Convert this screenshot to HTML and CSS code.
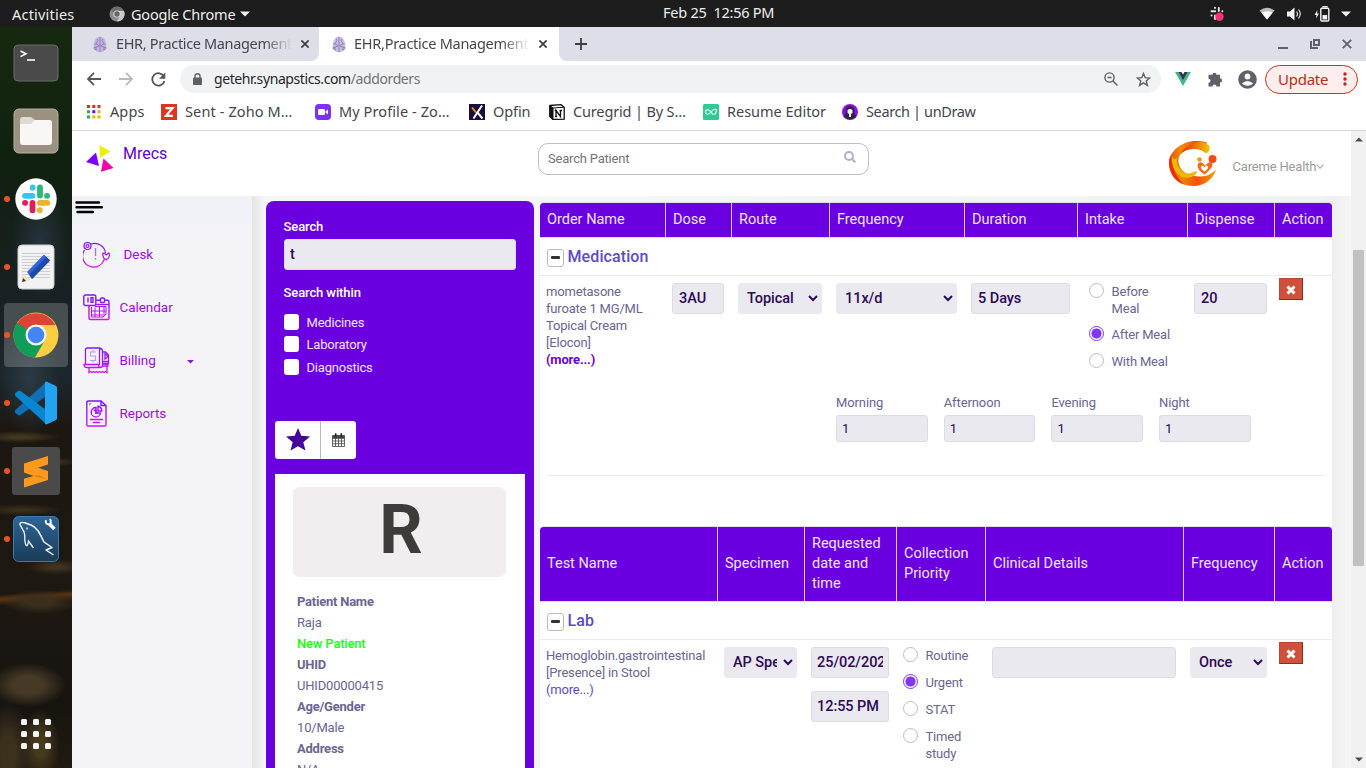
FILE: index.html
```html
<!DOCTYPE html>
<html lang="en">
<head>
<meta charset="utf-8">
<title>Mrecs - Add Orders</title>
<link rel="stylesheet" href="styles.css">
</head>
<body>
<div class="topbar">
  <span class="activities">Activities</span>
  <svg class="app-ico" width="16" height="16" viewBox="0 0 16 16"><circle cx="8" cy="8" r="7.5" fill="#8d8d8d"/><path d="M8 8L1.5 4.5A7.5 7.5 0 0 1 14.6 4.5L8 4.5Z" fill="#6c6c6c"/><path d="M8 8L11.3 9.5 7.8 15.5A7.5 7.5 0 0 0 15 5L9 5Z" fill="#c8c8c8"/><circle cx="8" cy="8" r="3.6" fill="#ddd"/><circle cx="8" cy="8" r="2.7" fill="#666"/></svg>
  <span class="app-name">Google Chrome</span>
  <svg width="10" height="6" viewBox="0 0 10 6"><path d="M0 .5h10L5 5.5z" fill="#f2f2f2"/></svg>
  <span class="clock">Feb 25&nbsp; 12:56 PM</span>
  <div class="tray">
    <svg class="t-slack" width="16" height="16" viewBox="0 0 16 16"><g stroke="#e6e6e6" stroke-width="1.900" stroke-linecap="round"><path d="M6 1.800v.2M6.200 5.200H2.500M9.800 2v3M13.300 5.200h.1M2.500 9.500h.1M6 9.500V13"/></g><circle cx="10.500" cy="10.800" r="4.200" fill="#f6317c"/></svg>
    <svg class="t-wifi" width="16" height="13" viewBox="0 0 16 13"><path d="M.5 3.500Q8-2 15.500 3.500L8 12.500z" fill="#bbb"/><path d="M2.500 5.800Q8 2.500 13.500 5.800L8 12.500z" fill="#fff"/></svg>
    <svg class="t-vol" width="15" height="14" viewBox="0 0 15 14"><path d="M0 4.500h3L7.500.5v13L3 9.500H0z" fill="#f2f2f2"/><path d="M9.500 4.500q2 2.500 0 5M11.500 2.500q3.500 4.500 0 9" fill="none" stroke="#ddd" stroke-width="1.200"/></svg>
    <svg class="t-bat" width="16" height="16" viewBox="0 0 16 16"><path d="M3.500 4L.5 9h2l-.5 3.500L5 7.500H3z" fill="#f2f2f2"/><path d="M9 1.500V.7h4v.8" stroke="#f2f2f2" fill="none" stroke-width="1.400"/><rect x="6.800" y="2.200" width="8" height="12.800" rx="1" fill="none" stroke="#f2f2f2" stroke-width="1.400"/><path d="M8.500 9h4.700v4.500H8.500z" fill="#f2f2f2"/></svg>
    <svg width="10" height="6" viewBox="0 0 10 6"><path d="M0 .5h10L5 5.500z" fill="#f2f2f2"/></svg>
  </div>
</div>
<div class="desktop">
  <div class="dock">
    <div class="tile"><svg width="48" height="48" viewBox="0 0 48 48"><rect x="2" y="6" width="44" height="36" rx="4" fill="#4a4a4a" stroke="#6a6a6a"/><path d="M8.500 12l5.500 2.800-5.500 2.800" fill="none" stroke="#fff" stroke-width="1.600"/><path d="M15 21h8" stroke="#fff" stroke-width="1.600"/></svg></div>
    <div class="tile"><svg width="48" height="48" viewBox="0 0 48 48"><rect x="2" y="2" width="44" height="44" rx="5" fill="#9a9180" stroke="#b9b2a2"/><path d="M8 13q0-3 3-3h8l4 3h14q3 0 3 3v3H8z" fill="#dedbd2"/><path d="M8 17h11l4-4h14q3 0 3 3v19q0 3-3 3H11q-3 0-3-3z" fill="#f8f7f5"/></svg></div>
    <div class="tile run"><svg width="48" height="48" viewBox="0 0 48 48"><circle cx="24" cy="24" r="20.700" fill="#fff"/><g stroke-width="5.800" stroke-linecap="round"><path d="M13 20.800h7.500" stroke="#36c5f0"/><path d="M20.700 12.500v.2" stroke="#36c5f0"/><path d="M28 12.500v8" stroke="#2eb67d"/><path d="M35 20.800h.2" stroke="#2eb67d"/><path d="M27.800 27.800h7.500" stroke="#ecb22e"/><path d="M27.800 35.200v.1" stroke="#ecb22e"/><path d="M20.500 27.800v7.500" stroke="#e01e5a"/><path d="M13 27.800h.2" stroke="#e01e5a"/></g></svg></div>
    <div class="tile run"><svg width="48" height="48" viewBox="0 0 48 48"><rect x="6" y="2" width="36" height="44" rx="4" fill="#f2f2f2" stroke="#ccc"/><path d="M10 10.500h28M10 13.500h28M10 16.500h28M10 19.500h28M10 22.500h28M10 25.500h28M10 28.500h28M10 31.500h28M10 34.500h28" stroke="#cfcfcf"/><path d="M12 31l6 6-8 2z" fill="#fbdfbb"/><path d="M10 39l1-4 3 3z" fill="#333"/><path d="M15 29L32 11.500l6 6L20 36z" fill="#2f64d8"/><path d="M17.500 31.500L34.500 14l3.500 3.500L20 36z" fill="#1e49a8"/></svg></div>
    <div class="tile run active"><svg width="48" height="48" viewBox="0 0 48 48"><circle cx="24" cy="24" r="22.500" fill="#ffcd40"/><path d="M24 24L4.500 13A22.500 22.500 0 0 1 43.500 14H24z" fill="#db4437"/><path d="M24 24L5 12A22.500 22.500 0 0 0 23 46.500L33 29z" fill="#0f9d58"/><circle cx="24" cy="24" r="10.500" fill="#f3f3f3"/><circle cx="24" cy="24" r="8.300" fill="#4285f4"/></svg></div>
    <div class="tile run"><svg width="48" height="48" viewBox="0 0 48 48"><path d="M3.500 31q-1.500 1.500 0 3l2.500 2q1.200.8 2.500 0L34 17V3z" fill="#0f70b5"/><path d="M3.500 17q-1.500-1.500 0-3L6 12q1.200-.8 2.500 0L34 31v14z" fill="#0a86d1"/><path d="M33 3l1.500-.5L44 7q1 .6 1 2v30q0 1.400-1 2l-9.500 4.500-1.500-.5z" fill="#23a4f2"/></svg></div>
    <div class="tile run"><svg width="48" height="48" viewBox="0 0 48 48"><rect width="48" height="48" rx="3" fill="#4a4a4a"/><path d="M12 16.500L36 9v8.500l-10 3.200L36 24v9L12 40.500v-8.700L21.500 29 12 25.500z" fill="#ff9a1f"/><path d="M21.500 29L36 32.600 26 28z" fill="#db7e14"/></svg></div>
    <div class="tile run"><svg width="48" height="48" viewBox="0 0 48 48"><defs><linearGradient id="my" x2="0" y2="1"><stop stop-color="#2d6597"/><stop offset="1" stop-color="#1a3c58"/></linearGradient></defs><rect x="1.500" y="1.500" width="45" height="45" rx="5" fill="url(#my)" stroke="#3b7cb0"/><path d="M12 17L8 9.500Q7.500 7 11 7.500c3 0 5 2 8 2.500 6 2 9 9 13 17l8 5.500-6 2.500 7.500 5" fill="none" stroke="#f2f8ff" stroke-width="1.500" stroke-linejoin="round"/><path d="M11.500 16c3 5 0 8 2 13 1 3 2.500 2 3-3l5 7M15 12.500v2" fill="none" stroke="#f2f8ff" stroke-width="1.300"/><path d="M37 8.500l5.500 5.500" stroke="#fff" stroke-width="3.500"/><path d="M34 5q-1.500 4 3.500 4.500Q40 8 38 4" fill="none" stroke="#fff" stroke-width="1.800"/></svg></div>
    <div class="tile apps"><svg width="48" height="48" viewBox="0 0 48 48"><g fill="#f4f4f4"><rect x="9" y="9" width="6" height="6" rx="1.500"/><rect x="21" y="9" width="6" height="6" rx="1.500"/><rect x="33" y="9" width="6" height="6" rx="1.500"/><rect x="9" y="21" width="6" height="6" rx="1.500"/><rect x="21" y="21" width="6" height="6" rx="1.500"/><rect x="33" y="21" width="6" height="6" rx="1.500"/><rect x="9" y="33" width="6" height="6" rx="1.500"/><rect x="21" y="33" width="6" height="6" rx="1.500"/><rect x="33" y="33" width="6" height="6" rx="1.500"/></g></svg></div>
  </div>

  <div class="browser">
    <div class="tabs">
      <div class="tab first">
        <svg class="fav" width="14" height="17" viewBox="0 0 14 17"><path d="M7 .5Q12 .5 13.300 8.500 14 16 7 16.500 0 16 .7 8.500 2 .5 7 .5z" fill="#c3b6dc"/><path d="M7 1v15M4 3q2 1 0 3t1 3-2 2 1 3M10 3q-2 1 0 3t-1 3 2 2-1 3M1.500 8h2M10.500 8h2M2 12h2M10 12h2" stroke="#8a76b5" stroke-width=".9" fill="none"/></svg>
        <span class="tab-title">EHR, Practice Management</span>
        <svg class="x" width="8" height="8" viewBox="0 0 8 8"><path d="M.4.4l7.200 7.200M7.600.4L.4 7.600" stroke="#3c3e42" stroke-width="1.700"/></svg>
      </div>
      <div class="tab current">
        <svg class="fav" width="14" height="17" viewBox="0 0 14 17"><path d="M7 .5Q12 .5 13.300 8.500 14 16 7 16.500 0 16 .7 8.500 2 .5 7 .5z" fill="#c9bfe0"/><path d="M7 1v15M4 3q2 1 0 3t1 3-2 2 1 3M10 3q-2 1 0 3t-1 3 2 2-1 3M1.500 8h2M10.500 8h2M2 12h2M10 12h2" stroke="#8a76b5" stroke-width=".9" fill="none"/></svg>
        <span class="tab-title">EHR,Practice Management</span>
        <svg class="x" width="8" height="8" viewBox="0 0 8 8"><path d="M.4.4l7.200 7.200M7.600.4L.4 7.600" stroke="#3c3e42" stroke-width="1.700"/></svg>
      </div>
      <div class="tab-rest">
        <svg width="12" height="12" viewBox="0 0 12 12"><path d="M6 0v12M0 6h12" stroke="#3c3e42" stroke-width="1.800"/></svg>
        <div class="winctl">
          <svg width="10" height="10" viewBox="0 0 10 10"><path d="M0 9h10" stroke="#5f6068" stroke-width="2"/></svg>
          <svg width="10" height="10" viewBox="0 0 10 10"><path d="M4 1h5v5H4z" fill="none" stroke="#5f6068" stroke-width="2"/><path d="M1 2v7h7" fill="none" stroke="#5f6068" stroke-width="2"/></svg>
          <svg width="10" height="10" viewBox="0 0 10 10"><path d="M.8.8l8.400 8.400M9.200.8L.8 9.200" stroke="#5f6068" stroke-width="1.800"/></svg>
        </div>
      </div>
    </div>

    <div class="toolbar">
      <svg width="14" height="14" viewBox="0 0 14 14"><path d="M14 7H1.500M7 .8L.9 7 7 13.200" fill="none" stroke="#56575c" stroke-width="1.800"/></svg>
      <svg class="fwd" width="14" height="14" viewBox="0 0 14 14"><path d="M0 7h12.500M7 .8L13.100 7 7 13.200" fill="none" stroke="#b9babd" stroke-width="1.800"/></svg>
      <svg class="reload" width="15" height="15" viewBox="0 0 15 15"><path d="M13 4.500A6.200 6.200 0 1 0 13.500 9" fill="none" stroke="#56575c" stroke-width="1.800"/><path d="M14.300.5v6.300H8z" fill="#56575c"/></svg>
      <div class="omnibox">
        <svg width="9" height="12" viewBox="0 0 9 12"><path d="M2 5V3a2.500 2.300 0 0 1 5 0v2" fill="none" stroke="#5f6166" stroke-width="1.400"/><rect y="4.500" width="9" height="7.500" rx="1" fill="#5f6166"/></svg>
        <span class="url">getehr.synapstics.com<i>/addorders</i></span>
        <svg class="zoomout" width="14" height="14" viewBox="0 0 14 14"><circle cx="5.500" cy="5.500" r="4.600" fill="none" stroke="#5f6166" stroke-width="1.400"/><path d="M3.500 5.500h4M9 9l4.500 4.500" stroke="#5f6166" stroke-width="1.500"/></svg>
        <svg width="15" height="15" viewBox="0 0 15 15"><path d="M7.500 1.500l1.700 4.200 4.500.3-3.500 2.900 1.200 4.500-3.900-2.500-3.900 2.500 1.200-4.500L1.300 6l4.500-.3z" fill="none" stroke="#5f6166" stroke-width="1.400"/></svg>
      </div>
      <svg class="vue" width="16" height="14" viewBox="0 0 16 14"><path d="M0 0h4.500L8 6l3.500-6H16L8 14z" fill="#41b883"/><path d="M3.500 0h3L8 2.500 9.500 0h3L8 8z" fill="#35305c"/></svg>
      <svg class="puzzle" width="15" height="15" viewBox="0 0 15 15"><path d="M4.500 2.800a2 2 0 0 1 4 0H12v3.500a2 2 0 0 1 0 4.200V14.500H8.500a2 2 0 0 0-4 0H.5v-3.700a2 2 0 0 0 0-4V2.800z" fill="#5f6068"/></svg>
      <svg class="user" width="19" height="19" viewBox="0 0 19 19"><circle cx="9.500" cy="9.500" r="9.300" fill="#5f6068"/><circle cx="9.500" cy="6.500" r="2.900" fill="#fff"/><path d="M3.800 13.600Q9.500 8.500 15.200 13.600 9.500 18 3.800 13.600z" fill="#fff"/></svg>
      <div class="update"><span>Update</span><svg width="4" height="14" viewBox="0 0 4 14"><g fill="#c5221f"><circle cx="2" cy="2" r="1.700"/><circle cx="2" cy="7" r="1.700"/><circle cx="2" cy="12" r="1.700"/></g></svg></div>
    </div>

    <div class="bookmarks">
      <div class="bm b1"><svg width="14" height="14" viewBox="0 0 14 14"><path d="M0 0h3v3H0zM5.300 0h3v3h-3zM10.500 0h3v3h-3z" fill="#d93025"/><path d="M0 5.200h3v3H0zM0 10.500h3v3H0z" fill="#2da94f"/><path d="M5.300 5.200h3v3h-3z" fill="#7a00f0"/><path d="M10.500 5.200h3v3h-3zM5.300 10.500h3v3h-3zM10.500 10.500h3v3h-3z" fill="#e6b800"/></svg><span>Apps</span></div>
      <div class="bm b2"><svg width="16" height="16" viewBox="0 0 16 16"><path d="M0 0h16v16H0z" fill="#e1341e"/><path d="M4.500 4.200h7L5 11.800h7" fill="none" stroke="#fff" stroke-width="2.200"/></svg><span>Sent - Zoho M…</span></div>
      <div class="bm b3"><svg width="16" height="16" viewBox="0 0 16 16"><rect width="16" height="16" rx="4" fill="#7b2ff7"/><rect x="3" y="5" width="7" height="6" rx="1.200" fill="#fff"/><path d="M10.500 7.500L13 5.500v5l-2.500-2z" fill="#fff"/></svg><span>My Profile - Zo…</span></div>
      <div class="bm b4"><svg width="16" height="16" viewBox="0 0 16 16"><path d="M0 0h16v16H0z" fill="#170f3a"/><path d="M13 1.500L4.500 14.500" stroke="#fff" stroke-width="2"/><path d="M8 8l5.500 6.500" stroke="#fff" stroke-width="2"/><path d="M3 3.500l4 5" stroke="#f58a1f" stroke-width="2"/></svg><span>Opfin</span></div>
      <div class="bm b5"><svg width="16" height="16" viewBox="0 0 16 16"><path d="M.8 1.500L12 .7l3.200 2.500v12L4 15.500.8 12.500z" fill="#fff" stroke="#111" stroke-width="1.300"/><path d="M1 1.500L4 4v11.500L1 12.500zM4 4l11-.8" fill="#111" stroke="#111"/><path d="M7 12.500v-6l4.500 6v-6M5.700 6.500H8M10.500 6.500h2.500M6 12.500h2.200" fill="none" stroke="#111" stroke-width="1.300"/></svg><span>Curegrid | By S…</span></div>
      <div class="bm b6"><svg width="16" height="16" viewBox="0 0 16 16"><rect width="16" height="16" rx="1.500" fill="#2dcb92"/><path d="M8 8C6 5 2.500 5 2.500 8S6 11 8 8s4-3 5.500-2.500Q13 11 10.500 10.500 9 10 8 8z" fill="none" stroke="#fff" stroke-width="1.100"/></svg><span>Resume Editor</span></div>
      <div class="bm b7"><svg width="16" height="16" viewBox="0 0 16 16"><circle cx="8" cy="8" r="8" fill="#8f0cf7"/><path d="M1.500 12Q4 11 3.500 6 4 2 8 2t4.500 4q-.5 5 2 6A8 8 0 0 1 1.500 12z" fill="#2f2440"/><path d="M5.500 6q2.500-2 5 0v3L9 10v3H7v-3L5.500 9z" fill="#f5f0f5"/></svg><span>Search | unDraw</span></div>
    </div>

    <div class="viewport">
      <div class="page">
        <header class="header">
          <svg class="logo" width="28" height="28" viewBox="0 0 28 28"><path d="M13.500 1l11 6.500-10.500 6z" fill="#eaf000"/><path d="M0 18l10-9.500L13 22z" fill="#7a00ff"/><path d="M17.500 14.500L27.500 24l-12.500 3.800z" fill="#f500a8"/></svg>
          <span class="brand">Mrecs</span>
          <div class="search"><span>Search Patient</span><svg width="12" height="12" viewBox="0 0 12 12"><circle cx="5" cy="5" r="4" fill="none" stroke="#afaecb" stroke-width="1.900"/><path d="M8 8l3.300 3.300" stroke="#afaecb" stroke-width="2"/></svg></div>
          <svg class="careme" width="50" height="46" viewBox="0 0 50 46"><defs><linearGradient id="c1" x1="0" y1="0" x2="1" y2="0"><stop stop-color="#ea4a10"/><stop offset=".25" stop-color="#f08a06"/><stop offset=".6" stop-color="#f2500c"/><stop offset="1" stop-color="#f3a000"/></linearGradient><linearGradient id="c2" x2="1"><stop stop-color="#f01e08"/><stop offset=".5" stop-color="#f2700c"/><stop offset="1" stop-color="#efc800"/></linearGradient></defs><path d="M39 1.500Q24-3 12 4.500 0 12 1 25 3 38 14 43 28 48 39 41 46 36 48 28.500 42 35 33 35.500 20 36 14 29 8 21 12 14 17 8 25 8H37z" fill="url(#c1)"/><path d="M13 12Q18 4 30 1 37 .5 41 4.500 43 8 40 11.500 37 13 34 9.500 22 5 13 12z" fill="url(#c2)"/><path d="M4.500 14Q2 29 14 36q10 3 15.500-5-2-2-6 1-9 2-12.500-5Q8 22 9 17 5 20 4.500 14z" fill="#edba05"/><path d="M2.500 14Q-1 24 4 33q4 8 12 10Q5 35 2.500 14z" fill="#ee2b0a"/><path d="M36.500 33.500Q29 29 29.500 24q1-4 5-2 2 1 2.500 3 3-5 6.500-3.500Q47 25 36.500 33.500z" fill="#ee6b12"/><path d="M36.500 30.500q-4.500-3-3.500-5.500 2-1.500 3.500 1.500 2-3 3.500-1.500 1 2.500-3.500 5.500z" fill="#fff"/><circle cx="31.500" cy="18.500" r="2.300" fill="#f09a10"/><circle cx="44.500" cy="18" r="4" fill="#f04a18"/></svg>
          <span class="org">Careme Health</span>
          <svg class="org-v" width="8" height="5" viewBox="0 0 8 5"><path d="M.6.7L4 4.100 7.400.7" fill="none" stroke="#a9a9a9" stroke-width="1.200"/></svg>
        </header>
        <div class="content">
          <nav class="side">
            <svg class="burger" width="28" height="13" viewBox="0 0 28 13"><g stroke="#000" stroke-width="2.400" stroke-linecap="round"><path d="M1.500 1.500h22.500M1.500 6.200h25.500M2.500 11h15.500"/></g></svg>
            <svg width="0" height="0" class="defs"><defs><linearGradient id="pv" gradientUnits="userSpaceOnUse" x1="0" y1="0" x2="0" y2="27"><stop stop-color="#7418f5"/><stop offset="1" stop-color="#d912f2"/></linearGradient></defs></svg>
            <a class="nav desk"><svg width="27" height="27" viewBox="0 0 27 27"><g fill="none" stroke="url(#pv)" stroke-width="1.200"><path d="M8 3A11 11 0 0 1 22.500 12M21.500 17A11 11 0 1 1 1.500 9"/><circle cx="4.500" cy="5" r="3.500"/><circle cx="4.500" cy="5" r="1.500"/><path d="M19.500 13l1.500-1 2.200 2 2.300-2 1.200 1-1 4-2.500 2-2.500-2z"/></g><path d="M11.800 7h1.400v8h-1.400zM11.800 17h1.400v1.600h-1.400z" fill="#b070f5"/></svg><span>Desk</span></a>
            <a class="nav"><svg width="27" height="27" viewBox="0 0 27 27"><g fill="none" stroke="url(#pv)" stroke-width="1.400"><rect x=".8" y="1" width="12" height="10.500" rx="1.500"/><path d="M5 3.500v5M8 3.800h2v4.500H8zM13 6.300h4.500M22 6.300h2.500q1.500 0 1.500 1.500V24q0 1.500-1.500 1.500h-17Q6 25.500 6 24V12"/><rect x="17.500" y="4" width="4" height="4.500" rx="1"/><path d="M13 10.500h13" /><path d="M9 17h14M8.500 21h14M12 13.500V23M16.500 12v11M21 12.500V20M8.500 13v10M12 12.500h11V20l-3 3H8.500" stroke-width="1"/></g></svg><span>Calendar</span></a>
            <a class="nav"><svg width="27" height="27" viewBox="0 0 27 27"><g fill="none" stroke="url(#pv)" stroke-width="1.300"><path d="M2.500 17V3q0-2 2-2h13q-1 .5-1 3v14M17 1.500q2.500 0 2.500 3v14q0 2-2.500 2M1 17.500h14.500q0 3 2 3H4q-3 0-3-3zM6 21v4.500l1.500-1 1.500 1 1.500-1 1.500 1 1.500-1 1.500 1 1.500-1 1.500 1 1.500-1 1.500 1 1.500-1 1.500 1V17M19.500 5h3l3 3v9h-6M19.500 19h6"/><path d="M20 14.500h5.500M22 6v6l3-2.500L22.500 7M20 16.500h5.500" /></g><path d="M13 5H7.500v4h5v4.500H7M10 3v2M10 13.500v2" fill="none" stroke="#b6a0ee" stroke-width="1.200"/></svg><span>Billing</span><svg class="caret" width="7" height="4" viewBox="0 0 7 4"><path d="M0 0h7L3.500 3.500z" fill="#8d14e0"/></svg></a>
            <a class="nav rep"><svg width="27" height="27" viewBox="0 0 27 27"><g fill="none" stroke="url(#pv)" stroke-width="1.400"><path d="M5.500 1H18l5 4.500V25q0 1-1 1H5q-1.200 0-1.200-1V2.500Q3.800 1 5.500 1zM18 1v4.500h5"/><path d="M13 7.500A4.700 4.700 0 1 0 17.500 13H13z"/><path d="M15 6.300A5 5 0 0 1 18.800 11H15zM11 11q1-2 2 0v2h2"/><path d="M7 19.500h13M10 22.500h7"/></g><path d="M6 3h3L6 6z" fill="#a78cf5"/></svg><span>Reports</span></a>
          </nav>
          <main class="main">
            <section class="panel">
              <label class="plabel">Search</label>
              <div class="field query">t</div>
              <label class="plabel within">Search within</label>
              <div class="check"><i></i><span>Medicines</span></div>
              <div class="check"><i></i><span>Laboratory</span></div>
              <div class="check"><i></i><span>Diagnostics</span></div>
              <div class="btns">
                <span class="star"><svg width="24" height="23" viewBox="0 0 24 23"><path d="M12 0l3.300 7.800 8.700.7-6.700 5.700L19.500 22.500 12 18.200l-7.500 4.300 2.200-8.300L0 8.500l8.700-.7z" fill="#44059c"/></svg></span>
                <span class="cal"><svg width="13" height="14" viewBox="0 0 13 14"><path d="M.5 2.500h12v11H.5zM.5 5.500h12M.5 8h12M.5 10.700h12M3.500 5v8.500M6.500 5v8.500M9.500 5v8.500" fill="none" stroke="#444" stroke-width=".8"/><path d="M.5 2.500h12V5H.5z" fill="#444"/><path d="M3.700.3v3.200M9.300.3v3.200" stroke="#222" stroke-width="1.600"/></svg></span>
              </div>
              <div class="patient">
                <div class="avatar">R</div>
                <dl>
                  <dt>Patient Name</dt><dd>Raja</dd><dd class="new">New Patient</dd>
                  <dt>UHID</dt><dd>UHID00000415</dd>
                  <dt>Age/Gender</dt><dd>10/Male</dd>
                  <dt>Address</dt><dd>N/A</dd>
                </dl>
              </div>
            </section>

            <section class="orders">
              <div class="table meds">
                <div class="row thead"><span>Order Name</span><span>Dose</span><span>Route</span><span>Frequency</span><span>Duration</span><span>Intake</span><span>Dispense</span><span>Action</span></div>
                <div class="group"><b class="minus"></b><h2>Medication</h2></div>
                <div class="row tbody">
                  <div class="name">mometasone furoate 1 MG/ML Topical Cream [Elocon] <strong>(more...)</strong></div>
                  <div><div class="field">3AU</div></div>
                  <div><div class="field select"><span>Topical</span><svg class="chev" width="10" height="7" viewBox="0 0 10 7"><path d="M1 1l4 4 4-4" fill="none" stroke="#2d0a55" stroke-width="2"/></svg></div></div>
                  <div><div class="field select"><span>11x/d</span><svg class="chev" width="10" height="7" viewBox="0 0 10 7"><path d="M1 1l4 4 4-4" fill="none" stroke="#2d0a55" stroke-width="2"/></svg></div></div>
                  <div><div class="field">5 Days</div></div>
                  <div class="radios"><p><i></i><span>Before Meal</span></p><p><i class="on"></i><span>After Meal</span></p><p><i></i><span>With Meal</span></p></div>
                  <div><div class="field">20</div></div>
                  <div><span class="del"><svg width="10" height="10" viewBox="0 0 10 10"><path d="M1.500 1.500l7 7M8.500 1.500l-7 7" stroke="#fff" stroke-width="3"/></svg></span></div>
                </div>
                <div class="times">
                  <div><label>Morning</label><div class="field small">1</div></div>
                  <div><label>Afternoon</label><div class="field small">1</div></div>
                  <div><label>Evening</label><div class="field small">1</div></div>
                  <div><label>Night</label><div class="field small">1</div></div>
                </div>
              </div>
              <div class="table lab">
                <div class="row thead"><span>Test Name</span><span>Specimen</span><span>Requested date and time</span><span>Collection Priority</span><span>Clinical Details</span><span>Frequency</span><span>Action</span></div>
                <div class="group"><b class="minus"></b><h2>Lab</h2></div>
                <div class="row tbody">
                  <div class="name">Hemoglobin.gastrointestinal [Presence] in Stool<br><a>(more...)</a></div>
                  <div><div class="field select spec"><span>AP Specimen</span><svg class="chev" width="10" height="7" viewBox="0 0 10 7"><path d="M1 1l4 4 4-4" fill="none" stroke="#2d0a55" stroke-width="2"/></svg></div></div>
                  <div class="dt"><div class="field"><span>25/02/2021</span></div><div class="field"><span>12:55 PM</span></div></div>
                  <div class="radios"><p><i></i><span>Routine</span></p><p><i class="on"></i><span>Urgent</span></p><p><i></i><span>STAT</span></p><p><i></i><span>Timed study</span></p></div>
                  <div><div class="field"></div></div>
                  <div><div class="field select"><span>Once</span><svg class="chev" width="10" height="7" viewBox="0 0 10 7"><path d="M1 1l4 4 4-4" fill="none" stroke="#2d0a55" stroke-width="2"/></svg></div></div>
                  <div><span class="del"><svg width="10" height="10" viewBox="0 0 10 10"><path d="M1.500 1.500l7 7M8.500 1.500l-7 7" stroke="#fff" stroke-width="3"/></svg></span></div>
                </div>
              </div>
            </section>
          </main>
        </div>
      </div>
      <div class="scrollbar">
        <svg width="8" height="5" viewBox="0 0 8 5"><path d="M0 4.500h8L4 .5z" fill="#4d4d4d"/></svg>
        <div class="thumb"></div>
        <svg class="down" width="8" height="5" viewBox="0 0 8 5"><path d="M0 .5h8l-4 4z" fill="#4d4d4d"/></svg>
      </div>
    </div>
  </div>
</div>
</body>
</html>
```
FILE: styles.css
```css
* { box-sizing: border-box; }
html, body { margin: 0; height: 768px; overflow: hidden; }
body { width: 1366px; display: flex; flex-direction: column; font-family: Roboto, "Liberation Sans", sans-serif; background: #fff; }
svg { flex: none; display: block; }
p, h2, dl, dd { margin: 0; }

/* Desktop top bar */
.topbar { position: relative; height: 27px; flex: none; display: flex; align-items: center; background: #1d1d1d; color: #eee; font: 14.500px/26px "Noto Sans", sans-serif; padding-left: 12px; white-space: nowrap; }
.activities { width: 97px; letter-spacing: .2px; }
.app-ico { margin-right: 6px; }
.app-name { width: 109px; letter-spacing: -.2px; }
.clock { position: absolute; left: 663px; top: -1px; letter-spacing: -.25px; }
.tray { margin-left: auto; display: flex; align-items: center; padding-right: 15px; }
.t-slack { margin-right: 34px; }
.t-wifi { margin-right: 12px; }
.t-vol { margin-right: 12px; }
.t-bat { margin-right: 11px; }

.desktop { flex: 1; display: flex; min-height: 0; }

/* Dock */
.dock { width: 72px; flex: none; padding: 4px 0 2px 4px; display: flex; flex-direction: column; gap: 4px;
  background:
    radial-gradient(ellipse 38px 22px at 28px 658px, #463a26 40%, transparent),
    radial-gradient(ellipse 24px 50px at 8px 725px, #3b311d 30%, transparent),
    radial-gradient(ellipse 20px 36px at 40px 718px, #463a1c 30%, transparent),
    radial-gradient(ellipse 40px 12px at 40px 575px, #3b2f1e 30%, transparent),
    linear-gradient(176deg, transparent 566px, #5e3510 571px, transparent 577px),
    radial-gradient(ellipse 40px 6px at 20px 410px, #42371f 20%, transparent),
    radial-gradient(ellipse 30px 5px at 50px 435px, #3d321f 20%, transparent),
    radial-gradient(ellipse 40px 6px at 22px 483px, #3a2f1c 20%, transparent),
    radial-gradient(ellipse 30px 8px at 56px 540px, #403420 20%, transparent),
    radial-gradient(ellipse 30px 60px at 40px 215px, #26333c, transparent),
    radial-gradient(ellipse 30px 60px at 30px 350px, #2b3a44, transparent),
    linear-gradient(#17290f 0, #10200f 140px, #182022 260px, #1c272d 350px, #1d1712 400px, #1d1812 560px, #171410 680px, #201a10); }
.tile { width: 64px; height: 64px; flex: none; border-radius: 4px; display: flex; align-items: center; justify-content: center; position: relative; }
.tile.active { background: rgba(255,255,255,.2); }
.run::before { content: ""; position: absolute; left: 0; top: 29px; width: 6px; height: 6px; border-radius: 50%; background: #e95420; }
.apps { margin-top: auto; }

/* Browser chrome */
.browser { flex: 1; display: flex; flex-direction: column; min-width: 0; font-family: "Noto Sans", sans-serif; color: #44464b; }
.tabs { height: 34px; flex: none; display: flex; background: #fff; font-size: 14.500px; line-height: 34px; }
.tab { display: flex; align-items: center; white-space: nowrap; }
.tab.first { width: 247px; padding-left: 21px; background: #dedee8; border-radius: 0 0 8px 0; }
.tab.current { width: 240px; padding-left: 13px; background: #fff; }
.tab-title { width: 176px; height: 34px; line-height: 33px; margin-left: 8px; overflow: hidden; letter-spacing: -.27px; -webkit-mask-image: linear-gradient(90deg, #000 148px, transparent 176px); mask-image: linear-gradient(90deg, #000 148px, transparent 176px); }
.tab.first .tab-title { margin-left: 9px; letter-spacing: -.35px; }
.tab .x { margin-left: 9px; }
.tab-rest { flex: 1; background: #dedee8; border-radius: 0 0 0 8px; display: flex; align-items: center; padding: 0 13px 0 16px; }
.winctl { margin-left: auto; margin-right: 1px; display: flex; gap: 22px; }
.toolbar { height: 36px; flex: none; display: flex; align-items: center; padding: 0 8px 0 15px; }
.fwd { margin-left: 18px; }
.reload { margin-left: 18px; }
.omnibox { width: 981px; height: 28px; margin-left: 14px; border-radius: 14px; background: #f1f2f4; display: flex; align-items: center; padding: 0 10px 0 13px; font-size: 14px; line-height: 20px; letter-spacing: -.4px; color: #25262a; }
.url { margin: -1px 0 0 12px; }
.url i { font-style: normal; color: #707277; }
.zoomout { margin-left: auto; margin-right: 18px; }
.vue { margin-left: 14px; }
.puzzle { margin-left: 17px; }
.user { margin-left: 15px; }
.update { margin-left: 8px; width: 93px; height: 29px; border: 1px solid #c5351a; border-radius: 15px; background: #fbeeec; color: #bf2c12; display: flex; align-items: center; padding-left: 12px; font-size: 15px; letter-spacing: -.25px; }
.update span { width: 65px; }
.bookmarks { height: 34px; flex: none; border-bottom: 1px solid #d6d6de; display: flex; padding: 0 0 3px 15px; font-size: 14.500px; line-height: 20px; letter-spacing: -.1px; white-space: nowrap; }
.bm { display: flex; align-items: center; }
.bm span { margin: -2px 0 0 8px; }
.b1 { width: 74px; letter-spacing: .1px; } .bookmarks .b1 span { margin-left: 9px; }
.b2 { width: 154px; letter-spacing: .12px; } .b3 { width: 154px; letter-spacing: .1px; } .b4 { width: 80px; } .b5 { width: 154px; letter-spacing: -.15px; } .b6 { width: 139px; letter-spacing: -.02px; } .b7 { letter-spacing: -.37px; }

.viewport { flex: 1; min-height: 0; display: flex; font-family: Roboto, "Liberation Sans", sans-serif; }
.page { width: 1279px; display: flex; flex-direction: column; overflow: hidden; }
.scrollbar { width: 15px; background: #f1f1f1; display: flex; flex-direction: column; align-items: center; padding: 6px 0; }
.thumb { width: 11px; height: 316px; margin-top: 108px; background: #c1c1c1; }
.down { margin-top: auto; }

/* Application header */
.header { height: 65px; flex: none; display: flex; background: #fff; padding-left: 14px; }
.logo { margin-top: 13px; }
.brand { margin: 13px 0 0 9px; width: 415px; font-size: 16px; line-height: 20px; color: #6200d2; }
.search { width: 331px; height: 32px; margin-top: 12px; border: 1px solid #bfbfbf; border-radius: 10px; display: flex; justify-content: space-between; padding: 7px 12px 0 9px; font-size: 13px; line-height: 16px; letter-spacing: -.2px; color: #757575; }
.careme { margin: 10px 0 0 299px; }
.org { margin: 28px 0 0 14.500px; font-size: 13px; line-height: 16px; letter-spacing: -.18px; color: #9b9b9b; }
.org-v { margin-top: 33px; }

.content { flex: 1; min-height: 0; display: flex; }
.side { width: 180px; background: linear-gradient(#f1f2f8 20px, #f4f4f8 45px); display: flex; flex-direction: column; }
.burger { margin: 5px 0 0 2.500px; flex: none; }
.defs { position: absolute; }
.nav { height: 27px; margin: 0 0 26px 10.500px; display: flex; align-items: center; font-size: 13.500px; color: #9d0ddb; flex: none; }
.nav span { margin: -2px 0 0 10px; line-height: 18px; letter-spacing: -.05px; }
.nav.desk { margin-top: 27px; } .nav.desk span { margin-left: 14px; }
.nav .caret { margin: 2px 0 0 31.500px; }
.main { flex: 1; min-width: 0; display: flex; gap: 5.500px; padding-left: 14px; background: linear-gradient(90deg, #e4e4e4, #f6f6f6 12px, #f2f2f2 1072px, #eee 1080px, #f6f6f6); }

/* Search panel */
.panel { width: 268px; margin-top: 5px; flex: none; background: #6a00e0; border-radius: 8px 8px 0 0; padding: 17px 9px 0; color: #fff; display: flex; flex-direction: column; font-size: 13px; }
.plabel { margin-left: 8.500px; font-weight: 500; line-height: 17px; letter-spacing: -.1px; }
.within { margin-top: 14px; margin-bottom: 13px; }
.field { height: 31px; border: 1px solid #dddce3; border-radius: 3px; background: #eae9f0; color: #2d0a55; font-weight: 500; font-size: 14.500px; line-height: 30px; letter-spacing: -.05px; padding: 0 6px; white-space: nowrap; overflow: hidden; }
.query { margin: 4px 9px 0; padding: 0 5px; }
.check { height: 15px; margin: 0 0 7.600px 9px; display: flex; align-items: center; color: #efe4ff; letter-spacing: -.2px; }
.check i { width: 15px; height: 16px; margin-right: 7.500px; border-radius: 3px; background: #fff; }
.check span { margin-top: 1.500px; }
.btns { width: 81px; height: 38px; margin: 39px 0 15px; background: #fff; border-radius: 3px; display: flex; flex: none; }
.star { width: 46px; border-right: 1px solid #bbb; display: flex; align-items: center; justify-content: center; }
.cal { flex: 1; display: flex; align-items: center; justify-content: center; }
.patient { width: 250px; background: #fff; padding: 13px 19px 0 18px; flex: 1; min-height: 0; overflow: hidden; }
.avatar { height: 90px; border-radius: 7px; background: #f2edef; color: #403b3b; font-size: 68px; font-weight: 700; line-height: 86px; text-align: center; padding-left: 3px; }
.patient dl { margin: 14px 0 0 4px; line-height: 21px; color: #6b6590; letter-spacing: -.18px; }
.patient dt { font-weight: 700; letter-spacing: -.23px; }
.patient .new { color: #1bfb14; font-weight: 500; }

/* Order tables */
.orders { width: 792px; margin-top: 6px; background: #fff; height: 566px; }
.row { display: grid; }
.meds .row { grid-template-columns: 126px 66px 98px 135px 113px 110px 87px 57px; }
.lab .row { grid-template-columns: 178px 87px 92px 89px 198px 91px 57px; }
.thead { height: 36px; border-top: 1px solid #e2dcea; border-bottom: 1px solid #dedee2; border-radius: 4px 4px 0 0; background: #6a00e0; color: #eee4fc; font-size: 14.500px; line-height: 20px; }
.lab .thead { height: 76px; }
.thead span { display: flex; align-items: center; padding: 0 5px 1px 7.500px; border-right: 1px solid #d9c8f2; }
.thead span:last-child { border-right: 0; }
.group { height: 38px; display: flex; border-bottom: 1px solid #ececee; padding-left: 7.500px; }
.minus { width: 17px; height: 18px; margin-top: 11px; border: 1px solid #bbb; border-radius: 3px; display: flex; align-items: center; justify-content: center; padding-bottom: 1px; }
.minus::before { content: ""; width: 9px; height: 3px; background: #333; border-radius: 1px; }
.group h2 { margin: 9px 0 0 3.500px; font-size: 16px; line-height: 20px; font-weight: 500; color: #5b4bc4; letter-spacing: .1px; }
.tbody { color: #6b6590; font-size: 13px; line-height: 17px; letter-spacing: -.18px; }
.tbody > div { padding: 7px 7.500px 0 6.500px; min-width: 0; }
.tbody > .name { padding-top: 7px; padding-right: 10px; padding-left: 6.500px; }
.name strong { display: block; color: #6a00e0; }
.name a { color: #5b4bc4; }
.select { display: flex; align-items: center; border-color: #eae9f0; padding: 0 3px 0 8px; }
.select span { flex: 1; overflow: hidden; line-height: 29px; }
.select .chev { margin: 0 0 1px 6px; }
.tbody .radios { padding: 7px 15px 0 11.500px; }
.lab .tbody .radios { padding-left: 6.500px; }
.radios p { display: flex; margin-bottom: 10px; }
.meds .radios p:first-child { margin-bottom: 9px; }
.radios i { width: 15px; height: 15px; flex: none; margin: 0 7.500px 0 0; border: 1px solid #bdbdbd; border-radius: 50%; background: #fff; }
.radios .on { border: 1.500px solid #8336f8; background: radial-gradient(circle, #8336f8 4.800px, #fff 5.300px); }
.tbody > div:last-child { padding: 2px 0 0 4.500px; }
.del { width: 24px; height: 22px; display: flex; align-items: center; justify-content: center; background: #d0503c; border: 1px solid; border-color: #b94431 #8c2c1b #8c2c1b #b94431; }
.del svg { margin-top: 1px; }
.dt { display: grid; gap: 13px; align-content: start; }
.dt .field { padding: 0 5px; }
.dt .field span { display: block; overflow: hidden; }
.times { display: grid; grid-template-columns: repeat(4, 91.700px); gap: 16px; margin: 14px 8px 0 7px; padding: 0 0 33px 289.500px; border-bottom: 1px solid #ececef; color: #6b6590; font-size: 13px; line-height: 17px; letter-spacing: -.1px; }
.small { height: 27px; margin-top: 4px; font-weight: 400; font-size: 13px; line-height: 25px; padding: 0 5px; }
.meds { height: 324px; }
```
